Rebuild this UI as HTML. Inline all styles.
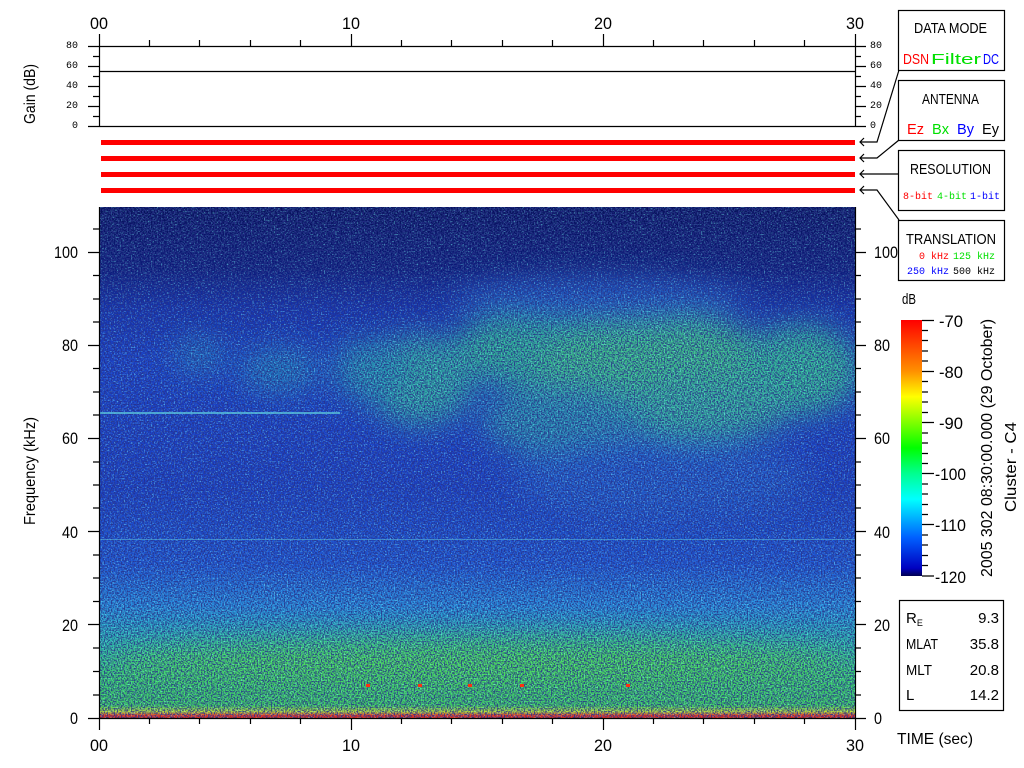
<!DOCTYPE html>
<html><head><meta charset="utf-8"><style>
html,body{margin:0;padding:0;background:#fff;width:1024px;height:768px;overflow:hidden}
svg{display:block}
text{font-family:"Liberation Sans",sans-serif}
.m{font-family:"Liberation Mono",monospace}
</style></head><body>
<svg width="1024" height="768" viewBox="0 0 1024 768" xmlns="http://www.w3.org/2000/svg">
<defs>
<linearGradient id="bg" x1="0" y1="207" x2="0" y2="718" gradientUnits="userSpaceOnUse">
<stop offset="0" stop-color="#06105a"/>
<stop offset="0.12" stop-color="#0a1a78"/>
<stop offset="0.2" stop-color="#1433b0"/>
<stop offset="0.3" stop-color="#1a44cc"/>
<stop offset="0.55" stop-color="#1a42c8"/>
<stop offset="0.7" stop-color="#1f5ad8"/>
<stop offset="0.78" stop-color="#2890e0"/>
<stop offset="0.86" stop-color="#2cc0b0"/>
<stop offset="0.92" stop-color="#38d070"/>
<stop offset="0.975" stop-color="#40d060"/>
<stop offset="0.988" stop-color="#c0e030"/>
<stop offset="0.995" stop-color="#f03020"/>
<stop offset="1" stop-color="#f03020"/>
</linearGradient>
<linearGradient id="cb" x1="0" y1="320" x2="0" y2="576" gradientUnits="userSpaceOnUse">
<stop offset="0" stop-color="#ff0000"/>
<stop offset="0.2" stop-color="#ff9000"/>
<stop offset="0.3" stop-color="#ffff00"/>
<stop offset="0.5" stop-color="#00ff00"/>
<stop offset="0.6" stop-color="#00ff90"/>
<stop offset="0.7" stop-color="#00ffff"/>
<stop offset="0.85" stop-color="#0060ff"/>
<stop offset="0.97" stop-color="#0000c0"/>
<stop offset="1" stop-color="#000050"/>
</linearGradient>
<filter id="blur" x="-20%" y="-20%" width="140%" height="140%"><feGaussianBlur stdDeviation="14"/></filter>
<filter id="noise" x="0" y="0" width="100%" height="100%">
<feTurbulence type="fractalNoise" baseFrequency="0.7" numOctaves="1" seed="3"/>
<feColorMatrix type="matrix" values="0 0 0 0 0.02  0 0 0 0 0.03  0 0 0 0 0.25  4 0 0 0 -1.6"/>
</filter>
<filter id="noise2" x="0" y="0" width="100%" height="100%">
<feTurbulence type="fractalNoise" baseFrequency="0.7" numOctaves="1" seed="11"/>
<feColorMatrix type="matrix" values="0 0 0 0 0.2  0 0 0 0 0.9  0 0 0 0 0.95  4 0 0 0 -2.0"/>
</filter>
<clipPath id="pc"><rect x="100" y="207" width="755" height="511"/></clipPath>
</defs>

<g clip-path="url(#pc)">
<rect x="100" y="207" width="755" height="511" fill="url(#bg)"/>
<g filter="url(#blur)" opacity="0.9">
<ellipse cx="560" cy="350" rx="110" ry="40" fill="#30c090"/>
<ellipse cx="660" cy="370" rx="120" ry="55" fill="#40d080"/>
<ellipse cx="800" cy="370" rx="60" ry="45" fill="#34c890"/>
<ellipse cx="420" cy="380" rx="55" ry="45" fill="#30b8a0"/>
<ellipse cx="370" cy="370" rx="35" ry="30" fill="#28a0b0"/>
<ellipse cx="280" cy="370" rx="40" ry="22" fill="#2488c0"/>
<ellipse cx="200" cy="355" rx="25" ry="18" fill="#2480c0"/>
<ellipse cx="700" cy="410" rx="90" ry="30" fill="#38c098"/>
<ellipse cx="560" cy="420" rx="80" ry="35" fill="#2a98b0"/>
<ellipse cx="600" cy="300" rx="150" ry="22" fill="#2060c8"/>
<ellipse cx="660" cy="480" rx="150" ry="40" fill="#2460d0"/>
<ellipse cx="480" cy="662" rx="380" ry="22" fill="#50e050"/>
</g>
<rect x="100" y="207" width="755" height="511" filter="url(#noise2)" opacity="0.55"/>
<rect x="100" y="207" width="755" height="511" filter="url(#noise)" opacity="0.85"/>
<rect x="100" y="412" width="240" height="2" fill="#60d0e0" opacity="0.7"/>
<rect x="100" y="539" width="755" height="1" fill="#60c8e0" opacity="0.5"/>
<g fill="#ff3010"><rect x="366" y="684" width="4" height="3"/><rect x="418" y="684" width="4" height="3"/><rect x="468" y="684" width="4" height="3"/><rect x="520" y="684" width="4" height="3"/><rect x="626" y="684" width="4" height="3"/></g>
</g>

<g stroke="#000" stroke-width="1.2" fill="none">
<path d="M99.5 207V718M855.5 207V718M88 718.5H866"/>
<path d="M99.5 34V46M351.5 34V46M603.5 34V46M855.5 34V46M149.5 40V46M199.5 40V46M250.5 40V46M300.5 40V46M401.5 40V46M451.5 40V46M502.5 40V46M552.5 40V46M653.5 40V46M703.5 40V46M754.5 40V46M804.5 40V46"/>
<path d="M99.5 718V730M351.5 718V730M603.5 718V730M855.5 718V730M149.5 718V724M199.5 718V724M250.5 718V724M300.5 718V724M401.5 718V724M451.5 718V724M502.5 718V724M552.5 718V724M653.5 718V724M703.5 718V724M754.5 718V724M804.5 718V724"/>
<path d="M88 46.5H866M88 126.5H866M99.5 46V126M855.5 46V126M99 71.5H855"/>
<path d="M88 66.5H99M88 86.5H99M88 106.5H99M93 56.5H99M93 76.5H99M93 96.5H99M93 116.5H99M855 66.5H866M855 86.5H866M855 106.5H866M855 56.5H861M855 76.5H861M855 96.5H861M855 116.5H861"/>
<path d="M88 624.5H99M88 531.5H99M88 438.5H99M88 345.5H99M88 252.5H99M855 624.5H866M855 531.5H866M855 438.5H866M855 345.5H866M855 252.5H866"/>
<path d="M93 695H99M93 671.5H99M93 648H99M93 601.5H99M93 578H99M93 555H99M93 508H99M93 485H99M93 462H99M93 415H99M93 392H99M93 368.5H99M93 322H99M93 299H99M93 275.5H99M93 229H99M855 695H861M855 671.5H861M855 648H861M855 601.5H861M855 578H861M855 555H861M855 508H861M855 485H861M855 462H861M855 415H861M855 392H861M855 368.5H861M855 322H861M855 299H861M855 275.5H861M855 229H861"/>
<rect x="898.5" y="10.5" width="106" height="60"/>
<rect x="898.5" y="80.5" width="106" height="60"/>
<rect x="898.5" y="150.5" width="106" height="60"/>
<rect x="898.5" y="220.5" width="106" height="60"/>
<rect x="899.5" y="600.5" width="104" height="110"/>
<path d="M899 70L877 142H860M864 138L860 142L864 146"/>
<path d="M899 140L877 158H860M864 154L860 158L864 162"/>
<path d="M899 174H860M864 170L860 174L864 178"/>
<path d="M899 220L877 190H860M864 186L860 190L864 194"/>
<path d="M922 320.5H934M922 371.5H934M922 422.5H934M922 473.5H934M922 524.5H934M922 576H934M922 330.5H928M922 340.5H928M922 351H928M922 361H928M922 381.5H928M922 392H928M922 402H928M922 412.5H928M922 433H928M922 443H928M922 453.5H928M922 463.5H928M922 484H928M922 494H928M922 504.5H928M922 514.5H928M922 535H928M922 545H928M922 555.5H928M922 565.5H928"/>
</g>
<rect x="901" y="320" width="21" height="256" fill="url(#cb)"/>

<g fill="#ff0000"><rect x="101" y="140" width="754" height="5"/><rect x="101" y="156" width="754" height="5"/><rect x="101" y="172" width="754" height="5"/><rect x="101" y="188" width="754" height="5"/></g>

<g font-size="17" fill="#000" lengthAdjust="spacingAndGlyphs">
<text x="90" y="29" textLength="18" lengthAdjust="spacingAndGlyphs">00</text>
<text x="342" y="29" textLength="18" lengthAdjust="spacingAndGlyphs">10</text>
<text x="594" y="29" textLength="18" lengthAdjust="spacingAndGlyphs">20</text>
<text x="846" y="29" textLength="18" lengthAdjust="spacingAndGlyphs">30</text>
<text x="90" y="751" textLength="18" lengthAdjust="spacingAndGlyphs">00</text>
<text x="342" y="751" textLength="18" lengthAdjust="spacingAndGlyphs">10</text>
<text x="594" y="751" textLength="18" lengthAdjust="spacingAndGlyphs">20</text>
<text x="846" y="751" textLength="18" lengthAdjust="spacingAndGlyphs">30</text>
<text x="70" y="724" textLength="8" lengthAdjust="spacingAndGlyphs">0</text>
<text x="62" y="631" textLength="16" lengthAdjust="spacingAndGlyphs">20</text>
<text x="62" y="538" textLength="16" lengthAdjust="spacingAndGlyphs">40</text>
<text x="62" y="444" textLength="16" lengthAdjust="spacingAndGlyphs">60</text>
<text x="62" y="351" textLength="16" lengthAdjust="spacingAndGlyphs">80</text>
<text x="54" y="258" textLength="24" lengthAdjust="spacingAndGlyphs">100</text>
<text x="874" y="724" textLength="8" lengthAdjust="spacingAndGlyphs">0</text>
<text x="874" y="631" textLength="16" lengthAdjust="spacingAndGlyphs">20</text>
<text x="874" y="538" textLength="16" lengthAdjust="spacingAndGlyphs">40</text>
<text x="874" y="444" textLength="16" lengthAdjust="spacingAndGlyphs">60</text>
<text x="874" y="351" textLength="16" lengthAdjust="spacingAndGlyphs">80</text>
<text x="874" y="258" textLength="24" lengthAdjust="spacingAndGlyphs">100</text>
<text x="939" y="327" textLength="24" lengthAdjust="spacingAndGlyphs">-70</text>
<text x="939" y="378" textLength="24" lengthAdjust="spacingAndGlyphs">-80</text>
<text x="939" y="429" textLength="24" lengthAdjust="spacingAndGlyphs">-90</text>
<text x="935" y="480" textLength="31" lengthAdjust="spacingAndGlyphs">-100</text>
<text x="935" y="531" textLength="31" lengthAdjust="spacingAndGlyphs">-110</text>
<text x="935" y="583" textLength="31" lengthAdjust="spacingAndGlyphs">-120</text>
<text x="902" y="304" font-size="15" textLength="14" lengthAdjust="spacingAndGlyphs">dB</text>
<text transform="translate(35,525) rotate(-90)" font-size="16" textLength="108" lengthAdjust="spacingAndGlyphs">Frequency (kHz)</text>
<text transform="translate(35,124) rotate(-90)" font-size="16" textLength="60" lengthAdjust="spacingAndGlyphs">Gain (dB)</text>
<text transform="translate(992,577) rotate(-90)" font-size="16" textLength="258" lengthAdjust="spacingAndGlyphs">2005 302 08:30:00.000 (29 October)</text>
<text transform="translate(1016,512) rotate(-90)" font-size="16" textLength="90" lengthAdjust="spacingAndGlyphs">Cluster - C4</text>
<text x="897" y="744" font-size="16" textLength="76" lengthAdjust="spacingAndGlyphs">TIME (sec)</text>
<text x="914" y="33" font-size="15" textLength="73" lengthAdjust="spacingAndGlyphs">DATA MODE</text>
<text x="903" y="64" font-size="15" fill="#ff0000" textLength="26" lengthAdjust="spacingAndGlyphs">DSN</text>
<text x="931" y="64" font-size="15" fill="#00e000" textLength="50" lengthAdjust="spacingAndGlyphs">Filter</text>
<text x="983" y="64" font-size="15" fill="#0000ff" textLength="16" lengthAdjust="spacingAndGlyphs">DC</text>
<text x="922" y="104" font-size="15" textLength="57" lengthAdjust="spacingAndGlyphs">ANTENNA</text>
<text x="907" y="134" font-size="15" fill="#ff0000" textLength="17" lengthAdjust="spacingAndGlyphs">Ez</text>
<text x="932" y="134" font-size="15" fill="#00e000" textLength="17" lengthAdjust="spacingAndGlyphs">Bx</text>
<text x="957" y="134" font-size="15" fill="#0000ff" textLength="17" lengthAdjust="spacingAndGlyphs">By</text>
<text x="982" y="134" font-size="15" textLength="17" lengthAdjust="spacingAndGlyphs">Ey</text>
<text x="910" y="174" font-size="15" textLength="81" lengthAdjust="spacingAndGlyphs">RESOLUTION</text>
<text x="906" y="244" font-size="15" textLength="90" lengthAdjust="spacingAndGlyphs">TRANSLATION</text>
<text x="906" y="623" font-size="15">R<tspan font-size="9" dy="3">E</tspan></text>
<text x="999" y="623" font-size="15" text-anchor="end">9.3</text>
<text x="906" y="649" font-size="15" textLength="32" lengthAdjust="spacingAndGlyphs">MLAT</text><text x="999" y="649" font-size="15" text-anchor="end">35.8</text>
<text x="906" y="675" font-size="15" textLength="26" lengthAdjust="spacingAndGlyphs">MLT</text><text x="999" y="675" font-size="15" text-anchor="end">20.8</text>
<text x="906" y="700" font-size="15">L</text><text x="999" y="700" font-size="15" text-anchor="end">14.2</text>
</g>
<g font-size="10" fill="#000">
<text x="78" y="48" text-anchor="end" class="m">80</text><text x="78" y="68" text-anchor="end" class="m">60</text><text x="78" y="88" text-anchor="end" class="m">40</text><text x="78" y="108" text-anchor="end" class="m">20</text><text x="78" y="128" text-anchor="end" class="m">0</text>
<text x="870" y="48" class="m">80</text><text x="870" y="68" class="m">60</text><text x="870" y="88" class="m">40</text><text x="870" y="108" class="m">20</text><text x="870" y="128" class="m">0</text>
<text x="903" y="199" class="m" fill="#ff0000" textLength="30" lengthAdjust="spacingAndGlyphs">8-bit</text>
<text x="937" y="199" class="m" fill="#00e000" textLength="30" lengthAdjust="spacingAndGlyphs">4-bit</text>
<text x="970" y="199" class="m" fill="#0000ff" textLength="30" lengthAdjust="spacingAndGlyphs">1-bit</text>
<text x="919" y="259" class="m" fill="#ff0000" textLength="30" lengthAdjust="spacingAndGlyphs">0 kHz</text>
<text x="953" y="259" class="m" fill="#00e000" textLength="42" lengthAdjust="spacingAndGlyphs">125 kHz</text>
<text x="907" y="274" class="m" fill="#0000ff" textLength="42" lengthAdjust="spacingAndGlyphs">250 kHz</text>
<text x="953" y="274" class="m" textLength="42" lengthAdjust="spacingAndGlyphs">500 kHz</text>
</g>
</svg>
</body></html>
